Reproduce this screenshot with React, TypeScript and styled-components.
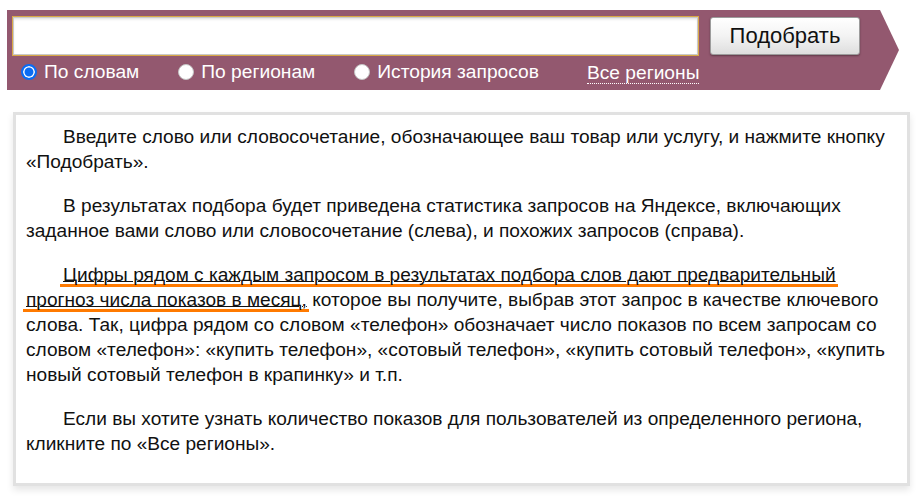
import React, { useState } from 'react';
import styled, { createGlobalStyle } from 'styled-components';

const GlobalStyle = createGlobalStyle`
  body {
    margin: 0;
    background: #fff;
    font-family: 'Liberation Sans', Arial, sans-serif;
  }
`;

const Page = styled.div`
  width: 922px;
  height: 498px;
  padding: 10px 0 0 7px;
  box-sizing: border-box;
  overflow: hidden;
`;

const Band = styled.div`
  width: 892px;
  height: 80px;
  background: #93586f;
  clip-path: polygon(0 0, calc(100% - 19px) 0, 100% 50%, calc(100% - 19px) 100%, 0 100%);
  padding: 6px 0 0 5px;
  box-sizing: border-box;
  display: flex;
  flex-direction: column;
  gap: 8px;
`;

const SearchRow = styled.div`
  display: flex;
  align-items: flex-start;
  gap: 11px;
`;

const SearchInput = styled.input`
  width: 687px;
  height: 40px;
  box-sizing: border-box;
  border: 1px solid #d9a847;
  box-shadow: inset 0 0 0 1px #c9c9c9, inset 0 2px 3px rgba(0, 0, 0, 0.15);
  background: #fff;
  outline: none;
  padding: 0 8px;
  font-family: inherit;
  font-size: 19px;
`;

const SubmitButton = styled.button`
  width: 150px;
  height: 38px;
  margin-top: 1px;
  border: 1px solid #9c9c9c;
  border-radius: 3px;
  background: linear-gradient(#ffffff, #f3f3f3 50%, #dedede);
  box-shadow: 0 1px 2px rgba(0, 0, 0, 0.35);
  font-family: inherit;
  font-size: 22px;
  color: #111;
  cursor: pointer;
  padding: 0;
`;

const OptionsRow = styled.div`
  display: flex;
  align-items: center;
  gap: 39px;
  padding-left: 9px;
  height: 16px;
`;

const Option = styled.label`
  display: flex;
  align-items: center;
  gap: 7px;
  color: #fff;
  font-size: 19.2px;
  cursor: pointer;
`;

const RadioDot = styled.span<{ $checked: boolean }>`
  width: 16px;
  height: 16px;
  box-sizing: border-box;
  border-radius: 50%;
  flex: none;
  background: ${p => (p.$checked ? '#0b6cf3' : '#fff')};
  border: ${p => (p.$checked ? '2px solid #0b6cf3' : '1px solid #c4c4c4')};
  box-shadow: ${p => (p.$checked ? 'inset 0 0 0 1.5px #fff' : 'none')};
`;

const RegionsLink = styled.a`
  margin-left: 9px;
  color: #fff;
  font-size: 19.2px;
  text-decoration: none;
  border-bottom: 1px dotted #fff;
  line-height: 21px;
  padding-top: 2px;
  cursor: pointer;
`;

const InfoCard = styled.div`
  margin: 22px 0 0 6px;
  width: 897px;
  height: 374px;
  box-sizing: border-box;
  border: 3px solid #e1e1e1;
  box-shadow: 0 4px 7px rgba(0, 0, 0, 0.1);
  padding: 9px 10px 0 10px;
  background: #fff;
`;

const Paragraph = styled.p`
  margin: 0 0 19px;
  font-size: 19.1px;
  line-height: 25px;
  text-indent: 37px;
  color: #111;
`;

const Marked = styled.span`
  text-decoration: underline;
  text-decoration-thickness: 1px;
  text-underline-offset: 0;
  padding: 0 2px 2px 3px;
  margin: 0 -2px 0 -3px;
  background-image: linear-gradient(#ff7a00, #ff7a00);
  background-repeat: no-repeat;
  background-size: 100% 3px;
  background-position: 0 100%;
  box-decoration-break: clone;
  -webkit-box-decoration-break: clone;
`;

const options = ['По словам', 'По регионам', 'История запросов'];

export default function App() {
  const [mode, setMode] = useState(0);

  return (
    <Page>
      <GlobalStyle />
      <Band>
        <SearchRow>
          <SearchInput type="text" />
          <SubmitButton>Подобрать</SubmitButton>
        </SearchRow>
        <OptionsRow>
          {options.map((label, i) => (
            <Option key={label} onClick={() => setMode(i)}>
              <RadioDot $checked={mode === i} />
              {label}
            </Option>
          ))}
          <RegionsLink>Все регионы</RegionsLink>
        </OptionsRow>
      </Band>

      <InfoCard>
        <Paragraph>
          Введите слово или словосочетание, обозначающее ваш товар или услугу, и нажмите кнопку
          «Подобрать».
        </Paragraph>
        <Paragraph>
          В результатах подбора будет приведена статистика запросов на Яндексе, включающих
          заданное вами слово или словосочетание (слева), и похожих запросов (справа).
        </Paragraph>
        <Paragraph>
          <Marked>
            Цифры рядом с каждым запросом в результатах подбора слов дают предварительный прогноз
            числа показов в месяц,
          </Marked>{' '}
          которое вы получите, выбрав этот запрос в качестве ключевого слова. Так, цифра рядом со
          словом «телефон» обозначает число показов по всем запросам со словом «телефон»: «купить
          телефон», «сотовый телефон», «купить сотовый телефон», «купить новый сотовый телефон в
          крапинку» и т.п.
        </Paragraph>
        <Paragraph>
          Если вы хотите узнать количество показов для пользователей из определенного региона,
          кликните по «Все регионы».
        </Paragraph>
      </InfoCard>
    </Page>
  );
}
